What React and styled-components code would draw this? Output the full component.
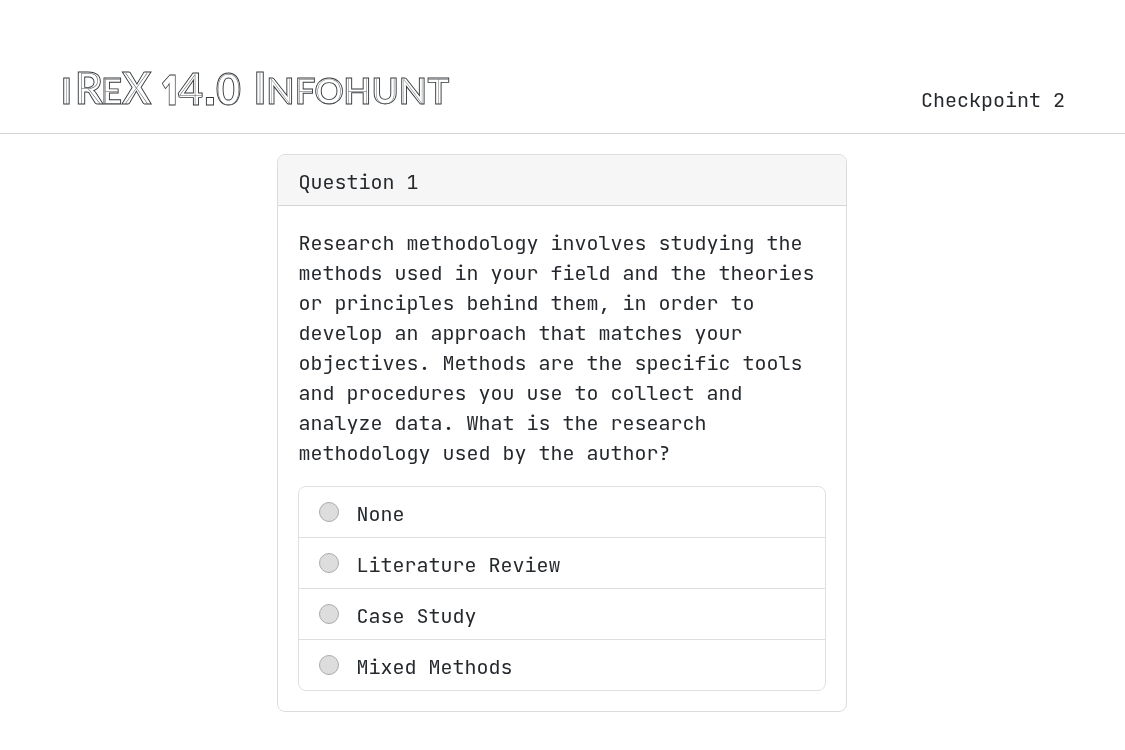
import styled, { createGlobalStyle } from "styled-components"

const GlobalStyle = createGlobalStyle`
  * {
    box-sizing: border-box;
  }
  body {
    margin: 0;
    background: #fff;
    color: #25292d;
    font-family: "JetBrains Mono", "DejaVu Sans Mono", monospace;
    font-size: 20px;
    line-height: 30px;
  }
`
const Page = styled.div`
  height: 750px;
  overflow: hidden;
  will-change: transform;
`
const Header = styled.header`
  height: 134px;
  padding: 0 60px 18px;
  display: flex;
  justify-content: space-between;
  align-items: flex-end;
  border-bottom: 1px solid #d3d3d3;
`
const Brand = styled.h1`
  margin: 0 0 -1px 2px;
  display: flex;
  gap: 11px;
  font-size: 43px;
  line-height: 52px;
`
const Word = styled.span`
  display: flex;
  align-items: baseline;
`
const Letter = styled.span`
  position: relative;
  display: flex;
  justify-content: center;
  width: ${(props) => props.$width}px;
  margin-left: ${(props) => props.$gap}px;
  font-family: ${(props) => props.$font || "Lato"}, sans-serif;
  font-size: ${(props) => props.$size || (props.$small ? 36 : 43)}px;
  font-weight: 900;
  text-transform: uppercase;
  color: transparent;
  -webkit-text-stroke: 0.9px #33373a;
  transform: scaleX(${(props) => props.$squeeze || 1});

  /* thin line down the middle of each stroke */
  &::after {
    content: "${(props) => (props.$font ? "" : props.$char)}";
    position: absolute;
    left: -10px;
    right: -10px;
    text-align: center;
    font-weight: 100;
    color: #55595c;
    -webkit-text-stroke: 0;
  }
`
const Card = styled.main`
  width: 570px;
  margin: 20px 0 0 277.4px;
  border: 1px solid #dcdcdc;
  border-radius: 8px;
  overflow: hidden;
`
const CardHeader = styled.div`
  padding: 12px 20px 8px;
  background: #f6f6f6;
  border-bottom: 1px solid #d5d5d5;
`
const CardBody = styled.div`
  padding: 22px 20px 20px;
`
const Question = styled.p`
  margin: 0 0 18px;
`
const Options = styled.div`
  border: 1px solid #e0e0e0;
  border-radius: 8px;
`
const Option = styled.label`
  display: flex;
  gap: 17px;
  padding: 12px 20px 8px;

  & + & {
    border-top: 1px solid #dfdfdf;
  }
`
const Radio = styled.input`
  appearance: none;
  width: 20px;
  height: 20px;
  margin: 3px 0 0;
  border: 1px solid #aaa;
  border-radius: 50%;
  background: #ddd;
`

// [character, gap before it, width, font, size, squeeze]
const words = [
  [
    ["i", 0, 9],
    ["R", 5, 26],
    ["e", 1, 17],
    ["X", 2.5, 28],
  ],
  [
    ["1", 1, 14, "Open Sans", 43, 0.72],
    ["4", 1.5, 25.5],
    [".", 2.5, 8, "Liberation Sans", 50],
    ["0", 0.5, 28],
  ],
  [
    ["I", 1.5, 10],
    ["n", 3.5, 24],
    ["f", 4, 17.5],
    ["o", 1.5, 27],
    ["h", 3, 24],
    ["u", 3.5, 24.5],
    ["n", 3.5, 24],
    ["t", 2, 22.5],
  ],
]

const options = ["None", "Literature Review", "Case Study", "Mixed Methods"]

function App() {
  return (
    <>
      <GlobalStyle />
      <Page>
        <Header>
          <Brand>
            {words.map((word, key) => (
              <Word key={`word-${key}`}>
                {word.map(([char, gap, width, font, size, squeeze], i) => (
                  <Letter
                    key={`${char}-${i}`}
                    $char={char}
                    $gap={gap}
                    $width={width}
                    $font={font}
                    $size={size}
                    $squeeze={squeeze}
                    $small={/[a-z]/.test(char)}
                  >
                    {char}
                  </Letter>
                ))}
              </Word>
            ))}
          </Brand>
          <span>Checkpoint 2</span>
        </Header>
        <Card>
          <CardHeader>Question 1</CardHeader>
          <CardBody>
            <Question>
              Research methodology involves studying the methods used in your field and the theories
              or principles behind them, in order to develop an approach that matches your
              objectives. Methods are the specific tools and procedures you use to collect and
              analyze data. What is the research methodology used by the author?
            </Question>
            <Options>
              {options.map((option) => (
                <Option key={option}>
                  <Radio type="radio" name="answer" />
                  <span>{option}</span>
                </Option>
              ))}
            </Options>
          </CardBody>
        </Card>
      </Page>
    </>
  )
}

export default App
